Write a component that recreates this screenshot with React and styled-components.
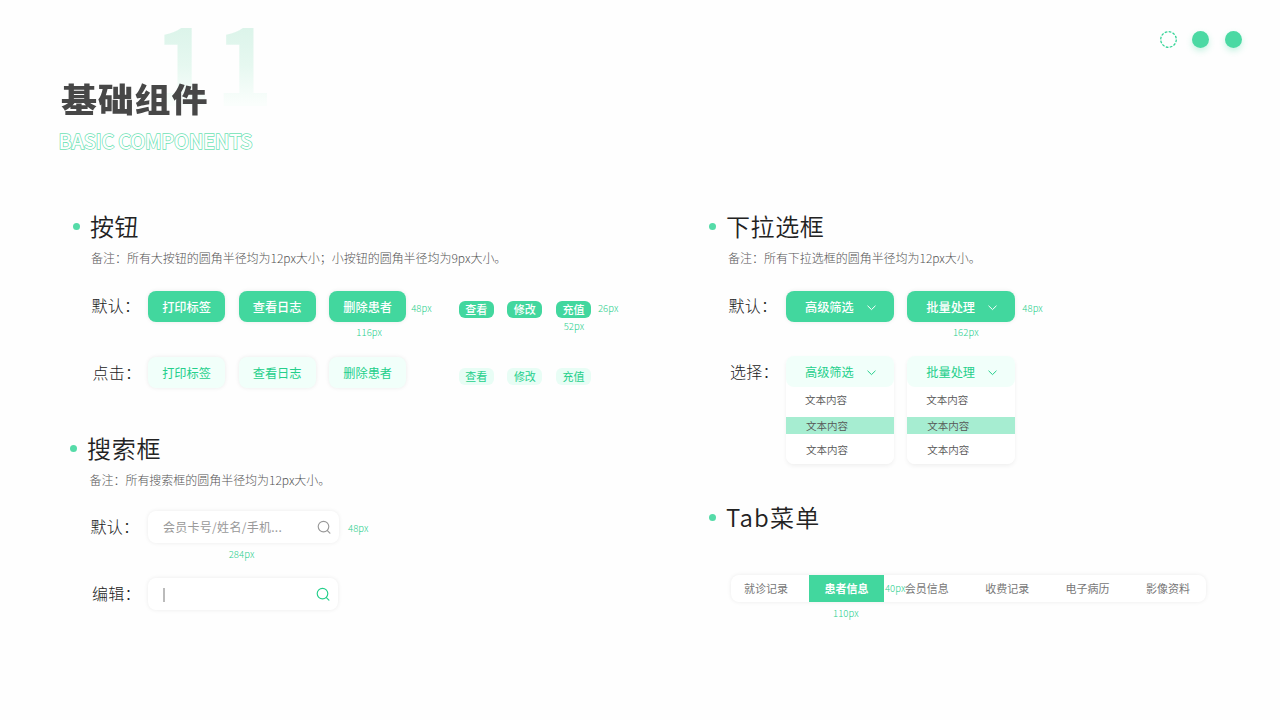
import styled, { createGlobalStyle, css } from "styled-components";

const GlobalStyle = createGlobalStyle`
  * {
    box-sizing: border-box;
  }
  body {
    margin: 0;
    background: #fefefe;
    font-family: "Noto Sans CJK SC", sans-serif;
  }
`;

const green = "#42d79e";
const greenText = "#24cf8b";

const StyledPage = styled.div`
  width: 1280px;
  height: 720px;
  overflow: hidden;
`;

const StyledHeader = styled.header`
  display: flex;
  justify-content: space-between;
  height: 210px;
`;

const StyledHeading = styled.div`
  position: relative;
  padding: 77px 0 0 61px;
`;

const StyledNumber = styled.div`
  position: absolute;
  left: 154px;
  top: 0;
  font-size: 108px;
  line-height: 118px;
  font-weight: 600;
  letter-spacing: 5px;
  color: transparent;
  background: linear-gradient(#dcf4ea 24%, #e6f8f0 55%, #fafefc 88%);
  background-clip: text;
  -webkit-background-clip: text;
  transform: scaleX(0.9);
  transform-origin: left;
`;

const StyledTitle = styled.h1`
  position: relative;
  margin: 0;
  font-size: 36px;
  line-height: 40px;
  font-weight: 900;
  letter-spacing: 0.8px;
  color: #474747;
  transform: scaleY(0.92);
`;

const StyledSubtitle = styled.div`
  margin: 9px 0 0 -2.5px;
  font-size: 20px;
  line-height: 30px;
  font-weight: 500;
  letter-spacing: -0.3px;
  white-space: nowrap;
  color: #fefefe;
  -webkit-text-stroke: 1.4px #6ce2b4;
  paint-order: stroke fill;
`;

const StyledDots = styled.div`
  display: flex;
  gap: 15.7px;
  padding: 31px 38px 0 0;
`;

const StyledDot = styled.i`
  width: 17px;
  height: 17px;
  border-radius: 50%;
  background: #4bd9a3;
  box-shadow: 0 3px 6px rgba(66, 215, 158, 0.3);
`;

const StyledColumns = styled.main`
  display: grid;
  grid-template-columns: 636px 644px;
`;

const StyledSection = styled.section`
  height: ${(props) => props.$height}px;
  padding-left: ${(props) => props.$left || 73}px;
`;

const StyledSectionTitle = styled.h2`
  display: flex;
  align-items: center;
  gap: 10px;
  margin: 0;
  height: 32px;
  line-height: 30px;
  padding-bottom: 1px;
  font-size: 24px;
  font-weight: 350;
  letter-spacing: ${(props) => props.$spacing || 0.5}px;
  color: #222;
  &::before {
    content: "";
    width: 7px;
    height: 7px;
    margin-top: 2px;
    border-radius: 50%;
    background: #55dba8;
  }
`;

const StyledNote = styled.p`
  margin: 7px 0 0 ${(props) => props.$left || 18}px;
  font-size: 12px;
  line-height: 18px;
  height: 18px;
  font-weight: 300;
  letter-spacing: -0.03px;
  white-space: nowrap;
  color: #555;
`;

const StyledRow = styled.div`
  display: flex;
  align-items: flex-start;
  margin-top: ${(props) => props.$top}px;
  height: ${(props) => props.$height || 31}px;
`;

const StyledLabel = styled.div`
  width: ${(props) => props.$width}px;
  margin-left: ${(props) => props.$left}px;
  font-size: 16px;
  line-height: ${(props) => props.$line || 30}px;
  font-weight: 300;
  letter-spacing: 0.2px;
  white-space: nowrap;
  color: #222;
`;

const StyledGroup = styled.div`
  display: flex;
  align-items: flex-start;
  gap: ${(props) => props.$gap || 13.6}px;
  margin: ${(props) => props.$top || 0}px 0 0 ${(props) => props.$left || 0}px;
`;

const StyledStack = styled.div`
  display: flex;
  flex-direction: column;
  align-items: center;
`;

const StyledSize = styled.span`
  font-size: 9.5px;
  line-height: 12px;
  font-weight: 300;
  letter-spacing: 0.1px;
  white-space: nowrap;
  color: #27cf8d;
  margin: ${(props) => props.$margin || 0};
`;

const buttonColors = css`
  color: ${(props) => (props.$active ? greenText : "#fff")};
  background: ${(props) => (props.$active ? "#f1fffa" : green)};
`;

const StyledButton = styled.button`
  width: 77px;
  height: 31px;
  padding: 0;
  border: 0;
  border-radius: 8px;
  font-family: inherit;
  font-size: 12.2px;
  line-height: 30px;
  font-weight: ${(props) => (props.$active ? 400 : 500)};
  white-space: nowrap;
  box-shadow: 0 0 4px rgba(0, 0, 0, 0.08);
  ${buttonColors}
`;

const StyledSmallButton = styled(StyledButton)`
  width: 35px;
  height: 17px;
  padding-bottom: 1px;
  border-radius: 6px;
  font-size: 11px;
  line-height: 16px;
  box-shadow: none;
  background: ${(props) => (props.$active ? "#e8fdf5" : green)};
`;

const StyledSearch = styled.div`
  display: flex;
  align-items: center;
  justify-content: space-between;
  width: ${(props) => props.$width}px;
  height: 32px;
  padding: 0 8px 0 15px;
  border-radius: 8px;
  background: #fff;
  box-shadow: 0 0 4px rgba(0, 0, 0, 0.08);
  font-size: 12px;
  line-height: 30px;
  letter-spacing: 0.28px;
  color: #999;
`;

const StyledCaret = styled.i`
  width: 1.5px;
  height: 14px;
  margin-top: 1px;
  background: #bbb;
`;

const StyledSelect = styled(StyledButton)`
  display: flex;
  align-items: center;
  justify-content: space-between;
  width: 108px;
  padding: ${(props) => props.$shift || 0}px 18px 0 19px;
  box-shadow: ${(props) =>
    props.$active ? "none" : "0 0 4px rgba(0, 0, 0, 0.08)"};
  svg {
    margin-top: 2px;
  }
`;

const StyledDropdown = styled.div`
  width: 108px;
  height: 108px;
  border-radius: 8px;
  background: linear-gradient(transparent 20px, #fff 20px);
  box-shadow: 0 2px 4px rgba(0, 0, 0, 0.06);
`;

const StyledOption = styled.div`
  height: 17.5px;
  margin-top: ${(props) => props.$top}px;
  padding-left: ${(props) => props.$left}px;
  font-size: 10.5px;
  line-height: 17px;
  font-weight: 350;
  color: #555;
  background: ${(props) => (props.$selected ? "#a6edd1" : "none")};
`;

const StyledTabs = styled.nav`
  display: flex;
  width: 475px;
  height: 27px;
  margin: 42px 0 0 22px;
  padding-left: 13px;
  gap: 36.4px;
  border-radius: 8px;
  background: #fff;
  box-shadow: 0 0 4px rgba(0, 0, 0, 0.08);
`;

const StyledTab = styled.div`
  position: relative;
  flex: none;
  width: 44px;
  font-size: 11px;
  line-height: 26px;
  white-space: nowrap;
  color: #777;
  ${(props) =>
    props.$active &&
    css`
      width: 75px;
      margin: 0 -15.5px;
      text-align: center;
      font-weight: 700;
      color: #fff;
      background: ${green};
    `}
`;

const StyledTabSize = styled(StyledSize)`
  position: absolute;
  left: 76px;
  top: 7px;
`;

const SearchIcon = ({ color }) => (
  <svg width="14" height="14" viewBox="0 0 14 14" fill="none" stroke={color}>
    <circle cx="6.5" cy="6.6" r="5.3" strokeWidth="1.15" />
    <path d="M10.4 10.6l2.5 2.5" strokeWidth="1.2" strokeLinecap="round" />
  </svg>
);

const Chevron = () => (
  <svg width="9" height="6" viewBox="0 0 9 6" fill="none" stroke="currentColor">
    <path d="M.8 1l3.7 3.6L8.2 1" strokeLinecap="round" strokeLinejoin="round" />
  </svg>
);

const Dropdown = ({ title, shift }) => (
  <StyledDropdown>
    <StyledSelect $active $shift={shift}>
      {title}
      <Chevron />
    </StyledSelect>
    <StyledOption $top={4} $left={19}>文本内容</StyledOption>
    <StyledOption $top={8} $left={20} $selected>文本内容</StyledOption>
    <StyledOption $top={7} $left={20}>文本内容</StyledOption>
  </StyledDropdown>
);

const bigButtons = ["打印标签", "查看日志", "删除患者"];
const smallButtons = ["查看", "修改", "充值"];
const tabs = ["就诊记录", "患者信息", "会员信息", "收费记录", "电子病历", "影像资料"];

export default function App() {
  return (
    <StyledPage>
      <GlobalStyle />
      <StyledHeader>
        <StyledHeading>
          <StyledNumber>11</StyledNumber>
          <StyledTitle>基础组件</StyledTitle>
          <StyledSubtitle>BASIC COMPONENTS</StyledSubtitle>
        </StyledHeading>
        <StyledDots>
          <svg width="17" height="17" viewBox="0 0 17 17" fill="none">
            <circle
              cx="8.5"
              cy="8.5"
              r="7.8"
              stroke="#35d497"
              strokeWidth="1.3"
              strokeDasharray="2.7 1.38"
            />
          </svg>
          <StyledDot />
          <StyledDot />
        </StyledDots>
      </StyledHeader>
      <StyledColumns>
        <div>
          <StyledSection $height={222}>
            <StyledSectionTitle>按钮</StyledSectionTitle>
            <StyledNote>
              备注：所有大按钮的圆角半径均为12px大小；小按钮的圆角半径均为9px大小。
            </StyledNote>
            <StyledRow $top={24}>
              <StyledLabel $left={18.5} $width={56.5} $line={29}>默认：</StyledLabel>
              <StyledGroup>
                {bigButtons.map((text, i) => (
                  <StyledStack key={text}>
                    <StyledButton>{text}</StyledButton>
                    {i === 2 && <StyledSize $margin="4px 0 0 3px">116px</StyledSize>}
                  </StyledStack>
                ))}
              </StyledGroup>
              <StyledSize $margin="11px 0 0 5px">48px</StyledSize>
              <StyledGroup $left={27} $top={10} $gap={13.6}>
                {smallButtons.map((text, i) => (
                  <StyledStack key={text}>
                    <StyledSmallButton>{text}</StyledSmallButton>
                    {i === 2 && <StyledSize $margin="2px 0 0 1px">52px</StyledSize>}
                  </StyledStack>
                ))}
              </StyledGroup>
              <StyledSize $margin="11px 0 0 7px">26px</StyledSize>
            </StyledRow>
            <StyledRow $top={35}>
              <StyledLabel $left={19.5} $width={55.5}>点击：</StyledLabel>
              <StyledGroup>
                {bigButtons.map((text) => (
                  <StyledButton key={text} $active>{text}</StyledButton>
                ))}
              </StyledGroup>
              <StyledGroup $left={52.6} $top={11} $gap={13.6}>
                {smallButtons.map((text) => (
                  <StyledSmallButton key={text} $active>{text}</StyledSmallButton>
                ))}
              </StyledGroup>
            </StyledRow>
          </StyledSection>
          <StyledSection $height={200} $left={70}>
            <StyledSectionTitle $spacing={0.7}>搜索框</StyledSectionTitle>
            <StyledNote $left={19.5}>备注：所有搜索框的圆角半径均为12px大小。</StyledNote>
            <StyledRow $top={22}>
              <StyledLabel $left={20.5} $width={57.5}>默认：</StyledLabel>
              <StyledStack>
                <StyledSearch $width={191}>
                  会员卡号/姓名/手机...
                  <SearchIcon color="#999" />
                </StyledSearch>
                <StyledSize $margin="5px 4px 0 0">284px</StyledSize>
              </StyledStack>
              <StyledSize $margin="11px 0 0 9px">48px</StyledSize>
            </StyledRow>
            <StyledRow $top={36}>
              <StyledLabel $left={22} $width={56} $line={31}>编辑：</StyledLabel>
              <StyledSearch $width={190}>
                <StyledCaret />
                <SearchIcon color={greenText} />
              </StyledSearch>
            </StyledRow>
          </StyledSection>
        </div>
        <div>
          <StyledSection $height={291}>
            <StyledSectionTitle $spacing={0.6}>下拉选框</StyledSectionTitle>
            <StyledNote $left={19}>备注：所有下拉选框的圆角半径均为12px大小。</StyledNote>
            <StyledRow $top={24}>
              <StyledLabel $left={19.5} $width={57.5} $line={29}>默认：</StyledLabel>
              <StyledGroup $gap={13.3}>
                <StyledSelect>
                  高级筛选
                  <Chevron />
                </StyledSelect>
                <StyledStack>
                  <StyledSelect $shift={1}>
                    批量处理
                    <Chevron />
                  </StyledSelect>
                  <StyledSize $margin="4px 0 0 9px">162px</StyledSize>
                </StyledStack>
              </StyledGroup>
              <StyledSize $margin="11px 0 0 7px">48px</StyledSize>
            </StyledRow>
            <StyledRow $top={34} $height={108}>
              <StyledLabel $left={21} $width={56} $line={31}>选择：</StyledLabel>
              <StyledGroup $gap={13.3}>
                <Dropdown title="高级筛选" />
                <Dropdown title="批量处理" shift={1} />
              </StyledGroup>
            </StyledRow>
          </StyledSection>
          <StyledSection $height={200}>
            <StyledSectionTitle $spacing={1.2}>Tab菜单</StyledSectionTitle>
            <StyledTabs>
              {tabs.map((tab, i) => (
                <StyledTab key={tab} $active={i === 1}>
                  {tab}
                  {i === 1 && <StyledTabSize>40px</StyledTabSize>}
                </StyledTab>
              ))}
            </StyledTabs>
            <StyledSize as="div" $margin="5px 0 0 124px">110px</StyledSize>
          </StyledSection>
        </div>
      </StyledColumns>
    </StyledPage>
  );
}
